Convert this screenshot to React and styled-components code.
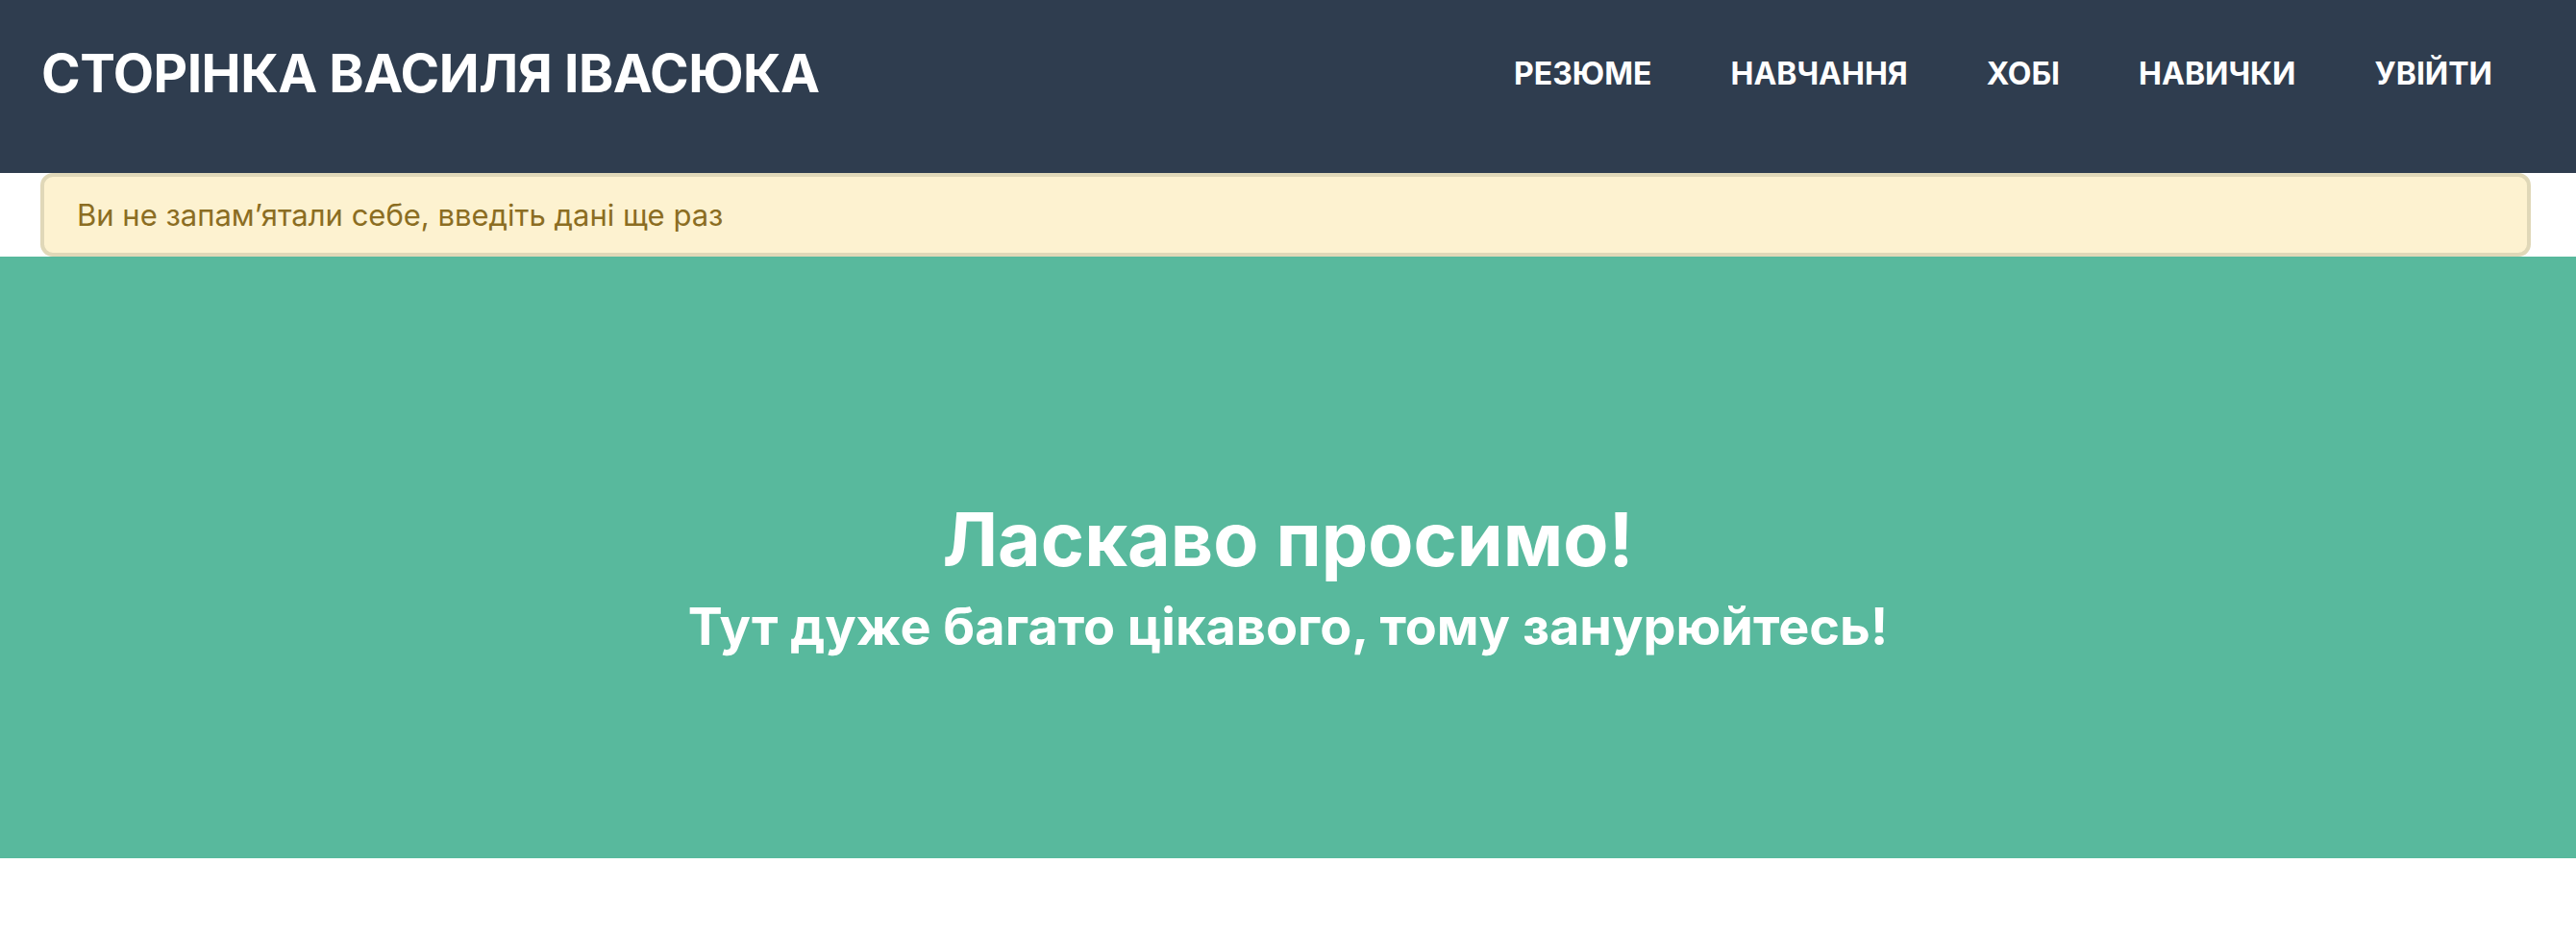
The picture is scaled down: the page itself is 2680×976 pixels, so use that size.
import React from "react";
import styled, { createGlobalStyle } from "styled-components";

const Global = createGlobalStyle`
    body {
        margin: 0;
        background: #ffffff;
        font-family: "Inter", "Noto Sans", sans-serif;
    }
`;

const Navbar = styled.header`
    background: #2f3d4f;
    height: 180px;
    padding: 0 46px 28px 43px;
    box-sizing: border-box;
    display: flex;
    align-items: center;
    justify-content: space-between;
`;

const Brand = styled.a`
    color: #ffffff;
    font-size: 55px;
    font-weight: 700;
    text-decoration: none;
    letter-spacing: -0.5px;
`;

const NavList = styled.nav`
    display: flex;
    align-items: center;
`;

const NavLink = styled.a`
    color: #ffffff;
    font-size: 32px;
    font-weight: 700;
    padding: 0 41px;
    text-decoration: none;
`;

const Alert = styled.div`
    margin: 0 47px 0 42px;
    height: 87px;
    box-sizing: border-box;
    border: 4px solid #e0d8b8;
    border-radius: 13px;
    background: #fdf2d0;
    color: #8b6d22;
    font-size: 31px;
    display: flex;
    align-items: center;
    padding-left: 34px;
`;

const Hero = styled.section`
    background: #58b99d;
    height: 626px;
    display: flex;
    flex-direction: column;
    align-items: center;
    justify-content: center;
    padding-top: 40px;
    box-sizing: border-box;
    color: #ffffff;
`;

const Title = styled.h1`
    margin: 0 0 12px;
    font-size: 77px;
    font-weight: 700;
    line-height: 1.2;
`;

const Subtitle = styled.h2`
    margin: 0;
    font-size: 54px;
    font-weight: 700;
    line-height: 1.2;
`;

const links = ["РЕЗЮМЕ", "НАВЧАННЯ", "ХОБІ", "НАВИЧКИ", "УВІЙТИ"];

export default function App() {
    return (
        <>
            <Global />
            <Navbar>
                <Brand href="#">СТОРІНКА ВАСИЛЯ ІВАСЮКА</Brand>
                <NavList>
                    {links.map((l) => (
                        <NavLink key={l} href="#">
                            {l}
                        </NavLink>
                    ))}
                </NavList>
            </Navbar>
            <Alert>Ви не запам’ятали себе, введіть дані ще раз</Alert>
            <Hero>
                <Title>Ласкаво просимо!</Title>
                <Subtitle>Тут дуже багато цікавого, тому занурюйтесь!</Subtitle>
            </Hero>
        </>
    );
}
